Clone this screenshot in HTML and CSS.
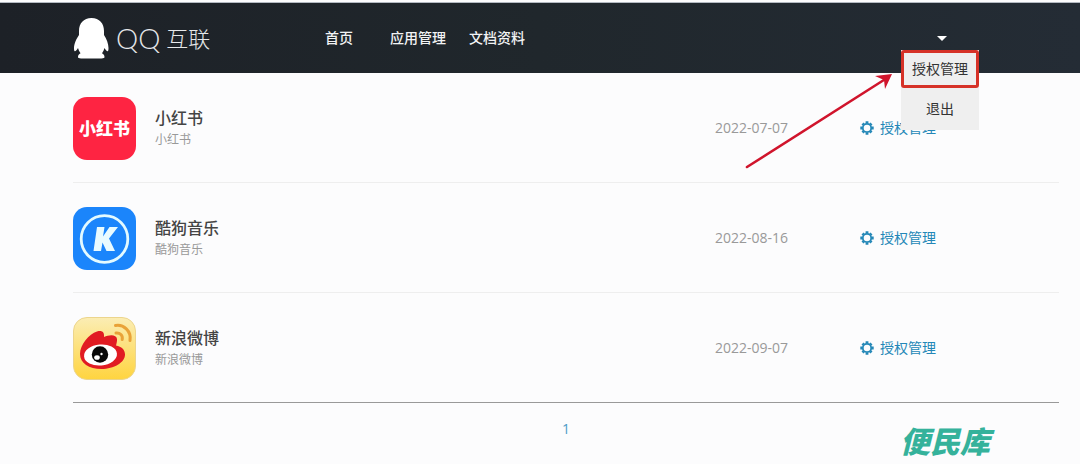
FILE: index.html
```
<!DOCTYPE html>
<html lang="zh-CN">
<head>
<meta charset="utf-8">
<meta name="viewport" content="width=device-width, initial-scale=1">
<title>QQ 互联</title>
<link rel="stylesheet" href="styles.css">
</head>
<body>
<svg class="defs" width="0" height="0" aria-hidden="true">
  <symbol id="gear" viewBox="0 0 14 14">
    <g fill="none" stroke="currentColor">
      <circle cx="7" cy="7" r="4.200" stroke-width="1.800"/>
      <path stroke-width="2.800" d="M7 .3v2.200M7 11.500v2.200M.3 7h2.200M11.500 7h2.200M2.500 2.500l1.300 1.300M10.200 10.200l1.300 1.300M2.500 11.500l1.300-1.300M10.200 3.800l1.300-1.300"/>
    </g>
  </symbol>
</svg>
<header class="header">
  <a class="logo" href="#">
    <svg class="penguin" viewBox="0 0 36 41" aria-hidden="true">
      <path fill="#fff" d="M18.500 0C10.500 0 6 5.500 6 13v4C3.500 20.500 1 26 1 30c0 1.800.2 3 .7 3.200.9.200 2.300-1.500 3.300-3.200.5 2 1.300 3.800 2.500 5.300C6 36 5 37.500 5 39c0 1 1 1.400 3 1.400h20.500c2 0 3-.4 3-1.400 0-1.500-1-3-2.500-3.700 1.200-1.500 2-3.300 2.500-5.300 1 1.700 2.400 3.400 3.300 3.200.5-.2.700-1.400.7-3.200 0-4-2-9.500-4.500-13v-4C31 5.500 26.500 0 18.500 0z"/>
    </svg>
    <span class="logo-qq">QQ</span>
    <span class="logo-name">互联</span>
  </a>
  <nav class="nav">
    <a class="nav-home" href="#">首页</a>
    <a href="#">应用管理</a>
    <a href="#">文档资料</a>
  </nav>
  <div class="user">
    <button class="user-toggle" type="button" aria-label="账号菜单" aria-expanded="true"><span class="caret"></span></button>
    <div class="menu">
      <a class="menu-item menu-item-marked" href="#">授权管理</a>
      <a class="menu-item" href="#">退出</a>
    </div>
    <svg class="arrow" viewBox="0 0 150 98" aria-hidden="true">
      <path d="M2 95L142 6" fill="none" stroke="#d0142c" stroke-width="2.600" stroke-linecap="round"/>
      <path d="M147 2L130 4L139 8L140 17z" fill="#d0142c"/>
    </svg>
  </div>
</header>
<main class="main">
  <ul class="apps">
    <li class="app">
      <svg class="app-icon" viewBox="0 0 63 63" aria-hidden="true">
        <rect width="63" height="63" rx="14" fill="#fe2442"/>
        <text class="red-mark" x="31.500" y="38" text-anchor="middle">小红书</text>
      </svg>
      <div class="app-info"><h2>小红书</h2><p>小红书</p></div>
      <time class="date" datetime="2022-07-07">2022-07-07</time>
      <a class="manage" href="#"><svg class="gear"><use href="#gear"/></svg>授权管理</a>
    </li>
    <li class="app">
      <svg class="app-icon" viewBox="0 0 63 63" aria-hidden="true">
        <rect width="63" height="63" rx="14" fill="#1b85fb"/>
        <circle cx="31.500" cy="32" r="23.300" fill="none" stroke="#e3faff" stroke-width="2.800"/>
        <path fill="#e9fbff" d="M24 20h7.500l-1.500 9.500L36.500 20H45l-9 11.500L42 44h-8.500l-4-8.500L28 44h-7.500z"/>
      </svg>
      <div class="app-info"><h2>酷狗音乐</h2><p>酷狗音乐</p></div>
      <time class="date" datetime="2022-08-16">2022-08-16</time>
      <a class="manage" href="#"><svg class="gear"><use href="#gear"/></svg>授权管理</a>
    </li>
    <li class="app">
      <svg class="app-icon" viewBox="0 0 63 63" aria-hidden="true">
        <defs><linearGradient id="gold" x2="0" y2="1"><stop stop-color="#fbedb4"/><stop offset="1" stop-color="#ffd43f"/></linearGradient></defs>
        <rect x=".5" y=".5" width="62" height="62" rx="13.500" fill="url(#gold)" stroke="#ecd58d"/>
        <path fill="#e11b22" d="M7 37c0-9 9-20 17-22.500 5-1.500 7.500.5 7 5.500 5-2.500 12.500-3 13 2 .2 2-.3 4-1 6.500 5.500 1 9 4 9 9 0 8-11 14.500-23.500 14.500S7 46 7 37z"/>
        <ellipse cx="27.500" cy="38" rx="16.500" ry="10.500" fill="#fff" transform="rotate(-5 27.500 38)"/>
        <circle cx="27" cy="37.500" r="8.200" fill="#080808"/>
        <ellipse cx="24" cy="40.500" rx="2.800" ry="2.300" fill="#fff"/>
        <circle cx="28.500" cy="37" r="1.200" fill="#fff"/>
        <path fill="none" stroke="#e9a238" stroke-width="3" stroke-linecap="round" d="M42.500 8.500c8-1.500 16 5.500 14.500 15M43 16c4-.5 7 2.500 6.200 6.500"/>
      </svg>
      <div class="app-info"><h2>新浪微博</h2><p>新浪微博</p></div>
      <time class="date" datetime="2022-09-07">2022-09-07</time>
      <a class="manage" href="#"><svg class="gear"><use href="#gear"/></svg>授权管理</a>
    </li>
  </ul>
  <nav class="pager" aria-label="分页"><a href="#">1</a></nav>
</main>
<div class="watermark">便民库</div>
</body>
</html>
```
FILE: styles.css
```
* {
  box-sizing: border-box;
}

body {
  margin: 0;
  background: #fcfcfd;
  color: #444;
  font-family: "Open Sans", "Noto Sans CJK SC", sans-serif;
  font-size: 14px;
  line-height: 20px;
}

a {
  color: inherit;
  text-decoration: none;
}

.defs {
  position: absolute;
}

.header {
  display: flex;
  align-items: center;
  height: 71px;
  margin-top: 2px;
  padding: 0 101px 0 73px;
  border-top: 1px solid #b4bac2;
  background: linear-gradient(90deg, #1d2127, #20272c 50%, #242c35);
}

.logo {
  display: flex;
  align-items: center;
  width: 252px;
  color: #e6e8ea;
}

.penguin {
  width: 36px;
  height: 41px;
  margin-right: 7px;
}

.logo-qq {
  margin-right: 6px;
  font-family: Lato, sans-serif;
  font-size: 28px;
  font-weight: 300;
}

.logo-name {
  font-size: 22px;
  font-weight: 300;
}

.nav {
  display: flex;
  gap: 23px;
  color: #f2f3f4;
  font-weight: 500;
}

.nav-home {
  margin-right: 14px;
}

.user {
  position: relative;
  width: 78px;
  margin-left: auto;
}

.user-toggle {
  display: flex;
  align-items: center;
  justify-content: center;
  width: 100%;
  height: 20px;
  padding: 0 0 0 4px;
  border: 0;
  background: none;
}

.caret {
  border: 5px solid transparent;
  border-top-color: #fff;
  border-bottom: 0;
}

.menu {
  position: absolute;
  z-index: 2;
  top: 22px;
  left: 0;
  width: 100%;
  background: #efefef;
  color: #333;
  text-align: center;
}

.menu-item {
  display: block;
  padding: 11px 0;
  line-height: 20px;
}

.menu-item-marked {
  padding: 6px 0;
  border: 3px solid #d63228;
  border-radius: 3px;
}

.arrow {
  position: absolute;
  z-index: 2;
  top: 44px;
  right: 84px;
  width: 150px;
  height: 98px;
}

.main {
  padding: 0 21px 0 73px;
}

.apps {
  margin: 0;
  padding: 0;
  border-bottom: 1px solid #999;
  list-style: none;
}

.app {
  display: grid;
  grid-template-columns: 82px 1fr 145px 199px;
  align-items: center;
  height: 110px;
  padding-top: 1px;
  border-bottom: 1px solid #eee;
}

.app:last-child {
  height: 109px;
  border-bottom: 0;
}

.app-icon {
  width: 63px;
  height: 63px;
}

.red-mark {
  fill: #fff;
  font-size: 17px;
  font-weight: 900;
}

.app-info h2 {
  margin: 0;
  font-size: 16px;
  font-weight: 500;
  line-height: 24px;
}

.app-info p {
  margin: 0;
  color: #999;
  font-size: 12px;
  line-height: 20px;
}

.date {
  color: #999;
}

.manage {
  display: flex;
  align-items: center;
  gap: 6px;
  color: #2387b7;
}

.gear {
  width: 14px;
  height: 14px;
}

.pager {
  padding-top: 16px;
  color: #4a9bc7;
  text-align: center;
}

.watermark {
  position: absolute;
  right: 90px;
  bottom: 4px;
  color: #35b29b;
  font-size: 30px;
  font-style: italic;
  font-weight: 900;
  line-height: 36px;
}
```
